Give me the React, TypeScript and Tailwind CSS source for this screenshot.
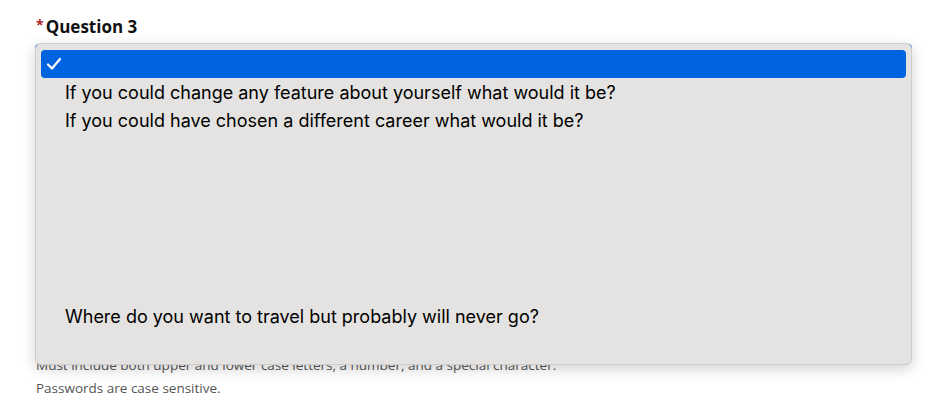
import { useState } from "react";

const options = [
  "",
  "If you could change any feature about yourself what would it be?",
  "If you could have chosen a different career what would it be?",
  "",
  "",
  "",
  "",
  "",
  "",
  "Where do you want to travel but probably will never go?",
  "",
];

export default function App() {
  const [selected] = useState(0);
  return (
    <div className="min-h-screen bg-white font-['Open_Sans',sans-serif] text-[#222]">
      <div className="pl-[35px] pr-[36px] pt-[15px]">
        <label className="flex items-start gap-[2px] pl-px text-[17px] font-bold leading-6 text-[#111]">
          <span className="mt-[2px] text-[14px] leading-4 text-[#b3261e]">*</span>
          Question 3
        </label>
        <div className="relative mt-[5px]">
          <div className="h-[48px] rounded-[4px] border-2 border-[#1a73e8] bg-white" />
          <div className="absolute left-0 right-0 top-[-1px] z-10 rounded-[6px] border border-[#cfcdcb] bg-[#e4e3e1] px-[5px] py-[6px] font-['Inter',sans-serif] text-[18px] text-black shadow-[0_4px_14px_rgba(0,0,0,0.18)]">
            {options.map((o, i) => (
              <div
                key={i}
                className={`flex h-[28px] items-center rounded-[4px] pl-[24px] ${
                  i === selected ? "bg-[#0063e0] text-white" : ""
                }`}
              >
                {i === selected && (
                  <svg width="16" height="14" viewBox="0 0 16 14" className="-ml-[19px] mr-[3px]">
                    <path d="M2 7.5 L6 11.5 L14 2" fill="none" stroke="white" strokeWidth="2.2" strokeLinecap="round" strokeLinejoin="round" />
                  </svg>
                )}
                <span>{o}</span>
              </div>
            ))}
          </div>
        </div>
        <div className="mt-[262px] pl-px text-[13.5px] leading-[23px] text-[#555]">
          <p>Must include both upper and lower case letters, a number, and a special character.</p>
          <p>Passwords are case sensitive.</p>
        </div>
      </div>
    </div>
  );
}
